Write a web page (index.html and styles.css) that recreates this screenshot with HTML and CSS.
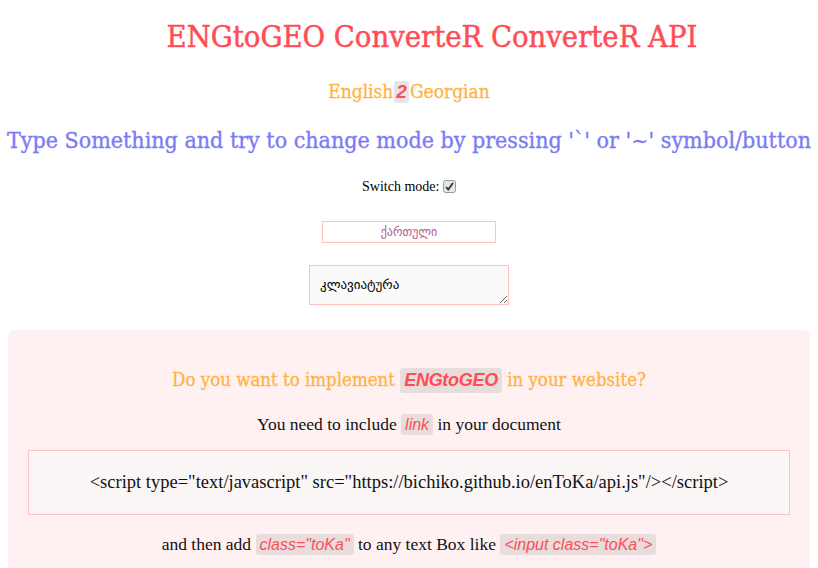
FILE: index.html
```html
<!DOCTYPE html>
<html>
<head>
<meta charset="utf-8">
<link rel="stylesheet" href="styles.css">
</head>
<body>
<header class="top">
  <h1 class="title">ENGtoGEO ConverteR ConverteR API</h1>
  <h3 class="sub">English<span class="two">2</span>Georgian</h3>
  <h2 class="hint">Type Something and try to change mode by pressing '`' or '~' symbol/button</h2>
  <div class="switch">Switch mode: <span class="chk"><svg width="13" height="13" viewBox="0 0 13 13"><rect x="0.5" y="0.5" width="12" height="12" rx="2" fill="#e6e6e6" stroke="#9a9a9a"/><path d="M3 7 L5.2 9.5 L10 3" fill="none" stroke="#333" stroke-width="1.8"/></svg></span></div>
  <div class="field"><input class="lang" type="text" value="ქართული" readonly></div>
  <div class="field"><textarea class="area">კლავიატურა</textarea></div>
</header>
<section class="panel">
  <h3 class="ask">Do you want to implement <span class="tag tag-big">ENGtoGEO</span> in your website?</h3>
  <p class="line">You need to include <span class="tag">link</span> in your document</p>
  <div class="code">&lt;script type="text/javascript" src="https://bichiko.github.io/enToKa/api.js"/&gt;&lt;/script&gt;</div>
  <p class="line">and then add <span class="tag">class="toKa"</span> to any text Box like <span class="tag">&lt;input class="toKa"&gt;</span></p>
</section>
</body>
</html>
```
FILE: styles.css
```css
* { box-sizing: border-box; }
html, body { margin: 0; padding: 0; background: #fff; }
body { padding: 0 8px; font-family: "DejaVu Serif Condensed", "DejaVu Serif", serif; overflow: hidden; height: 568px; }
.top { text-align: center; }
.title {
  margin: 0;
  padding: 17px 0 0 46px;
  font-size: 30.6px;
  font-weight: normal;
  color: #ff4d55;
  line-height: 40px;
  -webkit-text-stroke: 0.5px #ff4d55;
}
.sub {
  margin: 21px 0 0;
  font-size: 19px;
  font-weight: normal;
  color: #ffb347;
  line-height: 26px;
  -webkit-text-stroke: 0.3px #ffb347;
}
.two {
  display: inline-block;
  background: #e6e4e4;
  color: #ff4d55;
  font-family: "Liberation Sans", sans-serif;
  font-style: italic;
  font-weight: bold;
  padding: 0 2px;
  margin: 0 1px;
  border-radius: 3px;
  line-height: 22px;
  -webkit-text-stroke: 0;
}
.hint {
  margin: 20px -8px 0;
  font-size: 23px;
  font-weight: normal;
  color: #7b7cf5;
  line-height: 32px;
  white-space: nowrap;
  -webkit-text-stroke: 0.35px #7b7cf5;
}
.switch {
  margin-top: 22px;
  font-family: "Liberation Serif", serif;
  font-size: 14px;
  line-height: 18px;
}
.chk { display: inline-block; vertical-align: -2px; }
.chk svg { display: block; }
.field { display: flex; justify-content: center; }
.lang {
  margin-top: 25px;
  width: 174px;
  height: 22px;
  border: 1px solid #ffc2c2;
  text-align: center;
  font-family: "DejaVu Sans", sans-serif;
  font-size: 12px;
  color: #b0608e;
  background: #fff;
  outline: none;
  padding: 0;
}
.area {
  margin-top: 22px;
  width: 200px;
  height: 40px;
  border: 1px solid #ffc2c2;
  background: #fafafa;
  font-family: "DejaVu Sans", sans-serif;
  font-size: 13px;
  padding: 11px 10px 7px;
  resize: both;
  outline: none;
}
.panel {
  margin-top: 25px;
  background: #fff1f1;
  border-radius: 6px;
  padding: 36px 20px 20px;
  text-align: center;
  height: 260px;
}
.ask {
  margin: 0;
  font-size: 18.5px;
  font-weight: normal;
  color: #ffb347;
  line-height: 28px;
  -webkit-text-stroke: 0.3px #ffb347;
}
.tag {
  display: inline-block;
  background: #e8dcdc;
  color: #ff4d55;
  font-family: "Liberation Sans", sans-serif;
  font-style: italic;
  padding: 0 4px;
  border-radius: 3px;
  line-height: 21px;
  font-size: 16px;
  -webkit-text-stroke: 0;
}
.tag-big { font-weight: bold; font-size: 18px; line-height: 25px; letter-spacing: -0.3px; }
.line {
  margin: 18px 0 0;
  font-family: "Liberation Serif", serif;
  font-size: 17.5px;
  color: #111;
  line-height: 24px;
}
.code {
  margin: 14px 0 0;
  border: 1px solid #ffc2c2;
  background: #fbf6f6;
  height: 65px;
  display: flex;
  align-items: center;
  justify-content: center;
  font-family: "Liberation Serif", serif;
  font-size: 18.5px;
  color: #111;
}
.code + .line { margin-top: 17px; }
```
